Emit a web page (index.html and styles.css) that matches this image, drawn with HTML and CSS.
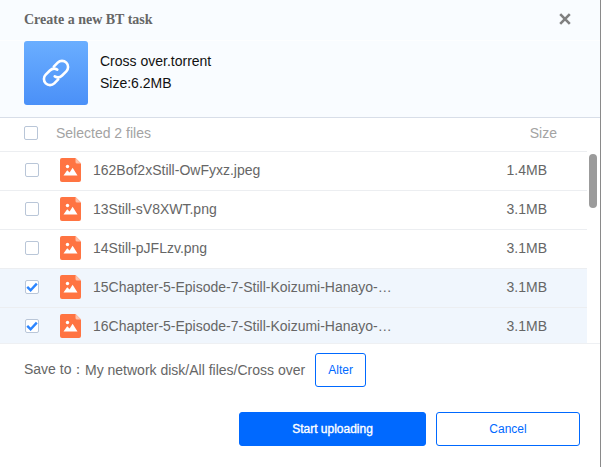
FILE: index.html
```html
<!DOCTYPE html>
<html lang="en">
<head>
<meta charset="utf-8">
<title>Create a new BT task</title>
<link rel="stylesheet" href="styles.css">
</head>
<body>
<svg class="defs" width="0" height="0" aria-hidden="true">
  <symbol id="img" viewBox="0 0 21 24">
    <path d="M2 0H15.5L21 5.5V22a2 2 0 0 1-2 2H2a2 2 0 0 1-2-2V2a2 2 0 0 1 2-2z" fill="#ff7442"/>
    <path d="M15.5 0L21 5.5H17a1.5 1.5 0 0 1-1.5-1.5z" fill="#ffc0a8"/>
    <circle cx="7.5" cy="8.5" r="1.7" fill="#fff"/>
    <path d="M3.5 17.5L7.2 12.2 9.6 14.6 12.6 9.8 17.5 17.5z" fill="#fff"/>
  </symbol>
</svg>
<main class="dialog">
  <header class="head">
    <h1 class="title">Create a new BT task</h1>
    <svg class="close" width="12" height="12" viewBox="0 0 12 12"><path d="M1.2 1.2L10.8 10.8M10.8 1.2L1.2 10.8" stroke="#808080" stroke-width="2.6" fill="none"/></svg>
  </header>
  <section class="torrent">
    <div class="thumb">
      <svg width="30" height="30" viewBox="0 0 30 30" fill="none" stroke="#fff" stroke-width="2.6" stroke-linecap="round">
        <path d="M12.8 8.6l3.9-3.9a6 6 0 0 1 8.6 8.6l-4.2 4.2a6 6 0 0 1-7.4.9"/>
        <path d="M17.2 21.4l-3.9 3.9a6 6 0 0 1-8.6-8.6l4.2-4.2a6 6 0 0 1 7.4-.9"/>
      </svg>
    </div>
    <div class="info">
      <div>Cross over.torrent</div>
      <div>Size:6.2MB</div>
    </div>
  </section>
  <div class="listhead">
    <span class="check"></span>
    <span class="selected">Selected 2 files</span>
    <span class="sizehead">Size</span>
  </div>
  <div class="listwrap">
    <ul class="list">
      <li class="row">
        <span class="check"></span>
        <svg class="ficon" width="21" height="24"><use href="#img"/></svg>
        <span class="name">162Bof2xStill-OwFyxz.jpeg</span>
        <span class="size">1.4MB</span>
      </li>
      <li class="row">
        <span class="check"></span>
        <svg class="ficon" width="21" height="24"><use href="#img"/></svg>
        <span class="name">13Still-sV8XWT.png</span>
        <span class="size">3.1MB</span>
      </li>
      <li class="row">
        <span class="check"></span>
        <svg class="ficon" width="21" height="24"><use href="#img"/></svg>
        <span class="name">14Still-pJFLzv.png</span>
        <span class="size">3.1MB</span>
      </li>
      <li class="row on">
        <span class="check"><svg width="12" height="10" viewBox="0 0 12 10"><path d="M1.2 4.8L4.6 8.2 10.8 1.6" stroke="#2b85ff" stroke-width="2.4" fill="none"/></svg></span>
        <svg class="ficon" width="21" height="24"><use href="#img"/></svg>
        <span class="name">15Chapter-5-Episode-7-Still-Koizumi-Hanayo-…</span>
        <span class="size">3.1MB</span>
      </li>
      <li class="row on">
        <span class="check"><svg width="12" height="10" viewBox="0 0 12 10"><path d="M1.2 4.8L4.6 8.2 10.8 1.6" stroke="#2b85ff" stroke-width="2.4" fill="none"/></svg></span>
        <svg class="ficon" width="21" height="24"><use href="#img"/></svg>
        <span class="name">16Chapter-5-Episode-7-Still-Koizumi-Hanayo-…</span>
        <span class="size">3.1MB</span>
      </li>
    </ul>
    <div class="thumbbar"></div>
  </div>
  <div class="save">
    <span class="savelabel">Save to：</span>
    <span class="savepath">My network disk/All files/Cross over</span>
    <button class="btn alter" type="button">Alter</button>
  </div>
  <div class="actions">
    <button class="btn primary" type="button">Start uploading</button>
    <button class="btn cancel" type="button">Cancel</button>
  </div>
</main>
</body>
</html>
```
FILE: styles.css
```css
* { box-sizing: border-box; }
html, body { margin: 0; padding: 0; }
body { width: 601px; height: 467px; overflow: hidden; background: #fff; font-family: "Liberation Sans", Arial, sans-serif; }
.defs { position: absolute; }
.dialog { width: 601px; height: 467px; border-right: 1px solid #8a8a8a; background: #fff; display: flex; flex-direction: column; }
.head { height: 41px; flex: none; background: #f9fcff; border-bottom: 1px solid #fdfeff; display: flex; align-items: center; justify-content: space-between; padding: 0 29px 0 24px; }
.title { margin: 0; font: bold 14px "Liberation Serif", "Times New Roman", serif; color: #666; }
.close { display: block; margin-bottom: 3px; }
.torrent { height: 77px; flex: none; background: #f9fcff; border-bottom: 1px solid #d8dee8; display: flex; padding-bottom: 12px; padding-left: 24px; }
.thumb { width: 64px; height: 64px; border-radius: 3px; background: linear-gradient(#6aaeff, #4a90f8); display: flex; align-items: center; justify-content: center; }
.info { margin-left: 12px; font-size: 14px; line-height: 22px; color: #111; display: flex; flex-direction: column; justify-content: center; padding-bottom: 3px; }
.check { width: 14px; height: 14px; flex: none; border: 1px solid #b9c6d8; border-radius: 2px; background: #fff; display: flex; align-items: center; justify-content: center; }
.listhead { height: 33px; flex: none; display: flex; align-items: center; padding: 0 43px 4px 24px; font-size: 14px; color: #a3a3a3; }
.selected { margin-left: 18px; flex: 1; }
.listwrap { position: relative; height: 193px; flex: none; border-bottom: 1px solid #eef0f3; overflow: hidden; }
.list { list-style: none; margin: 0; padding: 0; width: 587px; }
.row { height: 39px; display: flex; align-items: center; padding: 0 40px 2px 25px; border-top: 1px solid #eceef1; font-size: 14px; color: #666; }
.row.on { background: #f0f6fd; }
.ficon { margin-left: 21px; flex: none; display: block; }
.name { margin-left: 12px; flex: 1; white-space: nowrap; overflow: hidden; }
.size { flex: none; }
.thumbbar { position: absolute; right: 3px; top: 3px; width: 8px; height: 54px; border-radius: 4px; background: #9b9b9b; }
.save { height: 54px; flex: none; display: flex; align-items: center; padding: 0 0 2px 24px; font-size: 14px; color: #666; }
.savelabel { width: 61px; flex: none; white-space: nowrap; }
.btn { font-family: "Liberation Sans", Arial, sans-serif; font-size: 12px; border-radius: 3px; background: #fff; color: #0069ff; border: 1px solid #0069ff; padding: 0; }
.alter { width: 51px; height: 34px; margin-left: 10px; }
.actions { display: flex; justify-content: flex-end; gap: 10px; padding: 14px 20px 0 0; }
.primary { width: 187px; height: 34px; background: #0069ff; color: #fff; -webkit-text-stroke: 0.35px #fff; }
.cancel { width: 144px; height: 34px; }
```
